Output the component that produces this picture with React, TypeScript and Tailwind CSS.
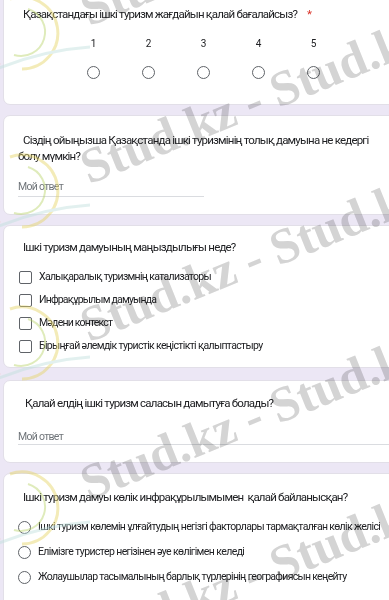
import type { ReactNode } from "react";

const font = { fontFamily: "Roboto, 'Noto Sans', Arial, sans-serif" };

function Card({ children, className = "" }: { children: ReactNode; className?: string }) {
  return (
    <div className={`w-[420px] rounded-[7px] border border-[#e2dfe8] bg-white pl-[14px] ${className}`}>
      {children}
    </div>
  );
}

function Radio() {
  return <span className="block h-[13px] w-[13px] shrink-0 rounded-full border-[1.5px] border-[#5f6368]" />;
}

function Checkbox() {
  return <span className="block h-[13px] w-[13px] shrink-0 rounded-[2px] border-[1.5px] border-[#5f6368]" />;
}

// faint "Stud.kz" watermark and logo swirls that sit over the form
function Watermark() {
  const tops = [-16, 142, 300, 458, 616];
  return (
    <div className="pointer-events-none absolute inset-0 overflow-hidden">
      {[30, 188, 340, 505].map((y, i) => (
        <svg key={i} className="absolute -left-[30px] opacity-[0.45]" style={{ top: y - 45 }} width="120" height="100" viewBox="0 0 120 100">
          <path d="M40 14 A36 36 0 1 1 52 84" fill="none" stroke="#e6d564" strokeWidth="3" />
          <path d="M58 24 A24 24 0 1 1 44 70" fill="none" stroke="#b9d46a" strokeWidth="2" />
          <path d="M18 30 A36 36 0 0 0 30 80" fill="none" stroke="#f1b9b0" strokeWidth="3" />
          <path d="M0 96 Q60 66 120 62" fill="none" stroke="#bfe0dc" strokeWidth="3" />
        </svg>
      ))}
      {tops.map((t, i) => (
        <div
          key={i}
          className="absolute left-[92px] origin-bottom-left -rotate-[22deg] whitespace-nowrap text-[50px] font-bold leading-[50px] text-[#d4d4d4] mix-blend-multiply"
          style={{ top: t, fontFamily: "'Liberation Serif', serif" }}
        >
          Stud.kz - Stud.kz
        </div>
      ))}
    </div>
  );
}

const answer = "text-[10.5px] leading-[14px] tracking-[-0.7px] text-[#70757a]";
const title = "text-[11.5px] leading-[16px] tracking-[-0.8px]";

export default function App() {
  const scale = [1, 2, 3, 4, 5];
  return (
    <div className="relative h-[600px] w-[389px] overflow-hidden bg-[#ece7f5] text-[#202124]" style={font}>
      <div className="flex flex-col gap-[10px] pl-[3px]">
        <Card className="-mt-[10px] pt-[15px] pb-[25px]">
          <div className={`indent-[5px] ${title}`}>
            Қазақстандағы ішкі туризм жағдайын қалай бағалайсыз?<span className="ml-[10px] text-[#d93025]">*</span>
          </div>
          <div className="ml-[48px] mt-[16px] flex">
            {scale.map((n) => (
              <div key={n} className="flex w-[55px] flex-col items-center">
                <span className="text-[10px] leading-[12px]">{n}</span>
                <span className="mt-[16px]">
                  <Radio />
                </span>
              </div>
            ))}
          </div>
        </Card>

        <Card className="pt-[16px] pb-[17px]">
          <div className={`w-[372px] indent-[5px] ${title}`}>
            Сіздің ойыңызша Қазақстанда ішкі туризмінің толық дамуына не кедергі болу мүмкін?
          </div>
          <div className={`mt-[16px] w-[186px] border-b border-[#dadce0] pb-[2px] ${answer}`}>Мой ответ</div>
        </Card>

        <Card className="pt-[13px] pb-[14px]">
          <div className={`indent-[5px] ${title}`}>Ішкі туризм дамуының маңыздылығы неде?</div>
          <div className="mt-[15px] flex flex-col gap-[9px] pl-[1px]">
            {[
              ["Халықаралық туризмнің катализаторы", "tracking-[-0.7px]"],
              ["Инфрақұрылым дамуында", "tracking-[-0.8px]"],
              ["Мәдени контекст", "tracking-[-0.8px]"],
              ["Бірыңғай әлемдік туристік кеңістікті қалыптастыру", "tracking-[-0.65px]"],
            ].map(([t, tr]) => (
              <div key={t} className="flex items-center gap-[7px]">
                <Checkbox />
                <span className={`text-[10.5px] leading-[14px] ${tr}`}>{t}</span>
              </div>
            ))}
          </div>
        </Card>

        <Card className="mt-[2px] pt-[14px] pb-[17px]">
          <div className={`indent-[7px] ${title}`}>Қалай елдің ішкі туризм саласын дамытуға болады?</div>
          <div className={`mt-[19px] border-b border-[#dadce0] ${answer}`}>Мой ответ</div>
        </Card>

        <Card className="pt-[15px] pb-[30px]">
          <div className={`whitespace-pre indent-[5px] ${title}`}>
            Ішкі туризм дамуы көлік инфрақұрылымымен  қалай байланысқан?
          </div>
          <div className="mt-[15px] flex flex-col gap-[11px]">
            {[
              ["Ішкі туризм көлемін ұлғайтудың негізгі факторлары тармақталған көлік желісі", "tracking-[-0.65px]"],
              ["Елімізге туристер негізінен әуе көлігімен келеді", "tracking-[-0.6px]"],
              ["Жолаушылар тасымалының барлық түрлерінің географиясын кеңейту", "tracking-[-0.7px]"],
            ].map(([t, tr]) => (
              <div key={t} className="flex items-center gap-[7px]">
                <Radio />
                <span className={`whitespace-nowrap text-[10.5px] leading-[14px] ${tr}`}>{t}</span>
              </div>
            ))}
          </div>
        </Card>
      </div>
      <Watermark />
    </div>
  );
}
